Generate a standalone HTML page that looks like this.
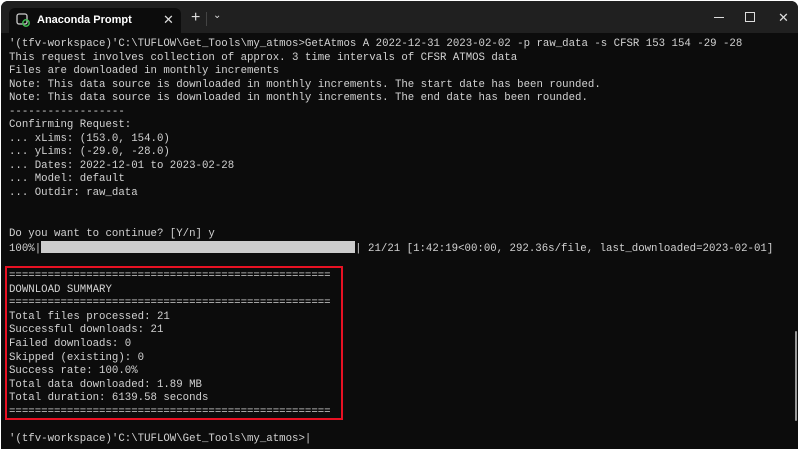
<!DOCTYPE html>
<html><head><style>
body{margin:0;width:800px;height:450px;background:#fff;overflow:hidden;position:relative}
.win{position:absolute;left:1px;top:1px;width:797px;height:448px;background:#0c0c0c;border-radius:7px 7px 0 0;overflow:hidden}
.tb{position:absolute;left:0;top:0;right:0;height:32px;background:#202020}
.tab{position:absolute;left:8px;top:7px;width:172px;height:25px;background:#0c0c0c;border-radius:6px 6px 0 0}
.tab span{position:absolute;left:28px;top:6px;font:bold 11px "Liberation Sans",sans-serif;color:#fff}
.ic{position:absolute;color:#ddd;font:13px "Liberation Sans",sans-serif}
pre{position:absolute;left:8px;top:37px;margin:0;font:10.72px/13.55px "Liberation Mono",monospace;color:#d2d2d2}
.bar{display:inline-block;width:314px;height:12px;background:#cccccc;vertical-align:-2px}
.box{position:absolute;left:4px;top:265px;width:334px;height:150px;border:2px solid #e81123}
.sb{position:absolute;left:794px;top:330px;width:2px;height:90px;background:#9a9a9a;border-radius:1px}
</style></head><body>
<div class="win">
<div class="tb">
<div class="tab">
<svg style="position:absolute;left:7px;top:5px" width="14" height="14" viewBox="0 0 14 14"><rect x="1" y="1" width="10" height="10" rx="2" fill="none" stroke="#ccc" stroke-width="1.3"/><circle cx="10" cy="10" r="3.2" fill="none" stroke="#3fb950" stroke-width="1.5"/></svg>
<span>Anaconda Prompt</span>
<div class="ic" style="left:154px;top:4px">✕</div>
</div>
<div class="ic" style="left:190px;top:8px;font-size:16px">+</div>
<div style="position:absolute;left:205px;top:11px;width:1px;height:14px;background:#444"></div>
<div class="ic" style="left:212px;top:9px;font-size:10px">⌄</div>
<div style="position:absolute;left:713px;top:16px;width:10px;height:1px;background:#ddd"></div>
<div style="position:absolute;left:744px;top:11px;width:8px;height:8px;border:1px solid #ddd"></div>
<div class="ic" style="left:777px;top:9px">✕</div>
</div>
<pre>'(tfv-workspace)'C:\TUFLOW\Get_Tools\my_atmos>GetAtmos A 2022-12-31 2023-02-02 -p raw_data -s CFSR 153 154 -29 -28
This request involves collection of approx. 3 time intervals of CFSR ATMOS data
Files are downloaded in monthly increments
Note: This data source is downloaded in monthly increments. The start date has been rounded.
Note: This data source is downloaded in monthly increments. The end date has been rounded.
------------------
Confirming Request:
... xLims: (153.0, 154.0)
... yLims: (-29.0, -28.0)
... Dates: 2022-12-01 to 2023-02-28
... Model: default
... Outdir: raw_data


Do you want to continue? [Y/n] y
100%|<span class="bar"></span>| 21/21 [1:42:19&lt;00:00, 292.36s/file, last_downloaded=2023-02-01]

==================================================
DOWNLOAD SUMMARY
==================================================
Total files processed: 21
Successful downloads: 21
Failed downloads: 0
Skipped (existing): 0
Success rate: 100.0%
Total data downloaded: 1.89 MB
Total duration: 6139.58 seconds
==================================================

'(tfv-workspace)'C:\TUFLOW\Get_Tools\my_atmos>|</pre>
<div class="box"></div>
<div class="sb"></div>
</div>
</body></html>
